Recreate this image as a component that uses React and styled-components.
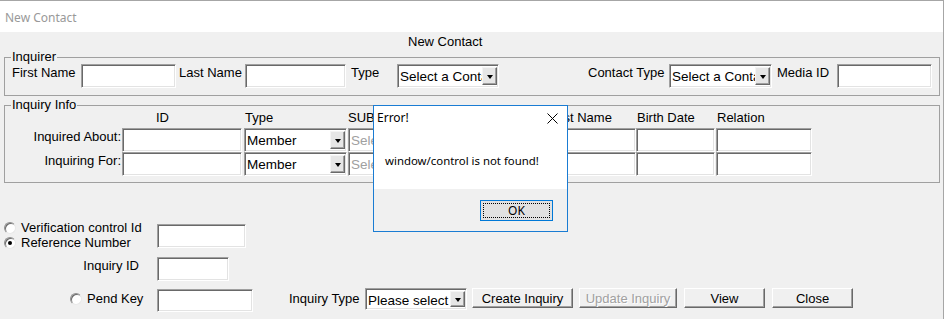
import React from "react";
import styled, { createGlobalStyle } from "styled-components";

const GlobalStyle = createGlobalStyle`
  html, body {
    margin: 0;
    padding: 0;
    background: #fff;
  }
  body {
    font-family: "Liberation Sans", Arial, sans-serif;
    font-size: 13px;
    color: #000;
  }
  * {
    box-sizing: border-box;
  }
`;

const Window = styled.div`
  position: relative;
  width: 944px;
  height: 319px;
  border-top: 1px solid #a6a6a6;
  border-right: 1px solid #a6a6a6;
  background: #f0f0f0;
  overflow: hidden;
`;

const TitleBar = styled.div`
  height: 31px;
  background: #fff;
  padding: 1px 0 0 5px;
  display: flex;
  align-items: center;
  font-family: "Noto Sans", sans-serif;
  font-size: 12px;
  color: #999;
`;

const Heading = styled.div`
  padding: 2px 0 0 408px;
  line-height: 16px;
  height: 18px;
`;

const GroupBox = styled.fieldset`
  margin: ${(p) => p.$mt || 0}px 0 0 4px;
  width: 936px;
  min-width: 0;
  padding: 0 0 ${(p) => p.$pb || 6}px 7px;
  border: 1px solid #a0a0a0;
`;

const Legend = styled.legend`
  margin-left: -1px;
  padding: 0 1px;
  line-height: 14px;
`;

const Row = styled.div`
  display: flex;
  align-items: flex-start;
  height: ${(p) => (p.$h ? `${p.$h}px` : "auto")};
`;

const Label = styled.span`
  flex: none;
  width: ${(p) => p.$w}px;
  margin-left: ${(p) => p.$ml || 0}px;
  margin-top: ${(p) => p.$mt || 0}px;
  padding-top: 1px;
  padding-right: ${(p) => p.$pr || 0}px;
  line-height: 16px;
  white-space: nowrap;
  text-align: ${(p) => (p.$right ? "right" : "left")};
`;

const sunken = `
  border: 1px solid;
  border-color: #a0a0a0 #fff #fff #a0a0a0;
  box-shadow: inset 1px 1px 0 #696969, inset -1px -1px 0 #e3e3e3;
  background: #fff;
`;

const TextBox = styled.div`
  ${sunken}
  flex: none;
  width: ${(p) => p.$w}px;
  height: ${(p) => p.$h || 24}px;
  margin-left: ${(p) => p.$ml || 0}px;
  margin-top: ${(p) => p.$mt || 0}px;
`;

const ComboBox = styled.div`
  ${sunken}
  flex: none;
  display: flex;
  width: ${(p) => p.$w}px;
  height: ${(p) => p.$h || 24}px;
  margin-left: ${(p) => p.$ml || 0}px;
  padding: 2px 1px 2px 0;
`;

const ComboText = styled.span`
  flex: 1;
  overflow: hidden;
  white-space: nowrap;
  padding-left: 2px;
  font-size: 13.5px;
  line-height: 19px;
  color: ${(p) => (p.$disabled ? "#a0a0a0" : "#000")};
`;

const DropButton = styled.span`
  flex: none;
  width: 15px;
  display: flex;
  align-items: center;
  justify-content: center;
  background: #e6e6e6;
  border: 1px solid;
  border-color: #f4f4f4 #696969 #696969 #f4f4f4;
  box-shadow: inset -1px -1px 0 #a0a0a0;
`;

const Arrow = styled.span`
  width: 0;
  height: 0;
  border-left: 3.5px solid transparent;
  border-right: 3.5px solid transparent;
  border-top: 4px solid #000;
  margin-top: 1px;
`;

const Combo = ({ w, h, ml, text, disabled }) => (
  <ComboBox $w={w} $h={h} $ml={ml}>
    <ComboText $disabled={disabled}>{text}</ComboText>
    <DropButton>
      <Arrow />
    </DropButton>
  </ComboBox>
);

const Grid = styled.div`
  display: grid;
  grid-template-columns: 110px 122px 104px 103px 98px 87px 80px 96px;
  grid-template-rows: 16px 24px 24px;
`;

const HeaderCell = styled.span`
  line-height: 12px;
  padding-left: ${(p) => p.$pl || 0}px;
  white-space: nowrap;
  overflow: hidden;
`;

const RowLabel = styled.span`
  padding: 1px 1px 0 0;
  line-height: 16px;
  text-align: right;
  white-space: nowrap;
`;

const Cell = styled.div`
  display: flex;
  padding-right: ${(p) => p.$pr || 0}px;
  & > * {
    flex: 1;
    width: auto;
  }
`;

const BottomArea = styled.div`
  margin-top: 37px;
  padding-left: 4px;
`;

const RadioStack = styled.div`
  flex: none;
  width: ${(p) => p.$w}px;
  padding-left: ${(p) => p.$pl || 0}px;
  margin-top: ${(p) => p.$mt || 0}px;
`;

const RadioLine = styled.div`
  display: flex;
  align-items: center;
  gap: 5px;
  height: 15px;
  line-height: 15px;
  white-space: nowrap;
`;

const RadioDot = styled.span`
  flex: none;
  position: relative;
  width: 12px;
  height: 12px;
  border-radius: 50%;
  border: 1px solid;
  border-color: #8f8f8f #e8e8e8 #e8e8e8 #8f8f8f;
  box-shadow: inset 1px 1px 0 #6a6a6a;
  background: #fff;
  &::after {
    content: "";
    display: ${(p) => (p.$checked ? "block" : "none")};
    position: absolute;
    left: 3px;
    top: 3px;
    width: 4px;
    height: 4px;
    border-radius: 50%;
    background: #000;
  }
`;

const Button = styled.button`
  flex: none;
  width: ${(p) => p.$w}px;
  height: 20px;
  margin-left: ${(p) => p.$ml || 0}px;
  padding: 0;
  font-family: "Liberation Sans", Arial, sans-serif;
  font-size: 13px;
  background: #f0f0f0;
  border: 1px solid;
  border-color: #fff #696969 #696969 #fff;
  box-shadow: inset -1px -1px 0 #a0a0a0;
  color: ${(p) => (p.disabled ? "#a0a0a0" : "#000")};
  text-shadow: ${(p) => (p.disabled ? "1px 1px 0 #fff" : "none")};
`;

const Dialog = styled.div`
  position: absolute;
  left: 373px;
  top: 104px;
  width: 195px;
  height: 127px;
  border: 1px solid #1a7cd3;
  background: #fff;
  display: flex;
  flex-direction: column;
  font-family: "Noto Sans", sans-serif;
  font-size: 12px;
`;

const DialogTitle = styled.div`
  height: 30px;
  display: flex;
  align-items: flex-start;
  justify-content: space-between;
  padding: 4px 9px 0 3px;
  line-height: 16px;
`;

const CloseIcon = styled.svg`
  margin-top: 3px;
`;

const DialogBody = styled.div`
  height: 53px;
  padding: 17px 0 0 11px;
  font-size: 11.4px;
  line-height: 16px;
`;

const DialogFooter = styled.div`
  flex: 1;
  background: #f0f0f0;
  display: flex;
  justify-content: flex-end;
  align-items: flex-start;
  padding: 11px 14px 0 0;
`;

const OkButton = styled.button`
  width: 73px;
  height: 21px;
  padding: 0;
  font-family: "Noto Sans", sans-serif;
  font-size: 12px;
  background: #e1e1e1;
  border: 1px solid #0078d7;
  outline: 1px dotted #000;
  outline-offset: -4px;
  color: #000;
`;

const App = () => {
  return (
    <>
      <GlobalStyle />
      <Window>
        <TitleBar>New Contact</TitleBar>
        <Heading>New Contact</Heading>

        <GroupBox $pb={7}>
          <Legend>Inquirer</Legend>
          <Row>
            <Label $w={69}>First Name</Label>
            <TextBox $w={95} />
            <Label $w={66} $ml={3}>Last Name</Label>
            <TextBox $w={101} />
            <Label $w={46} $ml={5}>Type</Label>
            <Combo w={102} text="Select a Contact Type" />
            <Label $w={81} $ml={89}>Contact Type</Label>
            <Combo w={103} text="Select a Contact Type" />
            <Label $w={60} $ml={5}>Media ID</Label>
            <TextBox $w={95} />
          </Row>
        </GroupBox>

        <GroupBox $mt={2} $pb={6}>
          <Legend>Inquiry Info</Legend>
          <Grid>
            <HeaderCell />
            <HeaderCell $pl={34}>ID</HeaderCell>
            <HeaderCell $pl={1}>Type</HeaderCell>
            <HeaderCell>SUB ID</HeaderCell>
            <HeaderCell>First Name</HeaderCell>
            <HeaderCell>Last Name</HeaderCell>
            <HeaderCell $pl={1}>Birth Date</HeaderCell>
            <HeaderCell $pl={1}>Relation</HeaderCell>

            {["Inquired About:", "Inquiring For:"].map((label) => (
              <React.Fragment key={label}>
                <RowLabel>{label}</RowLabel>
                <Cell $pr={2}>
                  <TextBox />
                </Cell>
                <Cell $pr={1}>
                  <Combo text="Member" />
                </Cell>
                <Cell $pr={1}>
                  <Combo text="Select..." disabled />
                </Cell>
                <Cell>
                  <TextBox />
                </Cell>
                <Cell>
                  <TextBox />
                </Cell>
                <Cell $pr={1}>
                  <TextBox />
                </Cell>
                <Cell>
                  <TextBox />
                </Cell>
              </React.Fragment>
            ))}
          </Grid>
        </GroupBox>

        <BottomArea>
          <Row $h={37}>
            <RadioStack $w={153}>
              <RadioLine>
                <RadioDot />
                Verification control Id
              </RadioLine>
              <RadioLine>
                <RadioDot $checked />
                Reference Number
              </RadioLine>
            </RadioStack>
            <TextBox $w={89} $mt={4} />
          </Row>
          <Row $h={31}>
            <Label $w={153} $pr={18} $right>
              Inquiry ID
            </Label>
            <TextBox $w={72} />
          </Row>
          <Row>
            <RadioStack $w={153} $pl={66} $mt={3}>
              <RadioLine>
                <RadioDot />
                Pend Key
              </RadioLine>
            </RadioStack>
            <TextBox $w={96} $h={23} $mt={1} />
            <Label $w={76} $ml={36} $mt={2}>Inquiry Type</Label>
            <Combo w={102} h={22} text="Please select one" />
            <Button $w={101} $ml={5}>Create Inquiry</Button>
            <Button $w={98} $ml={6} disabled>Update Inquiry</Button>
            <Button $w={81} $ml={7}>View</Button>
            <Button $w={81} $ml={7}>Close</Button>
          </Row>
        </BottomArea>

        <Dialog>
          <DialogTitle>
            <span>Error!</span>
            <CloseIcon width="11" height="11" viewBox="0 0 11 11">
              <path d="M0.5 0.5 L10.5 10.5 M10.5 0.5 L0.5 10.5" stroke="#000" strokeWidth="1" />
            </CloseIcon>
          </DialogTitle>
          <DialogBody>window/control is not found!</DialogBody>
          <DialogFooter>
            <OkButton>OK</OkButton>
          </DialogFooter>
        </Dialog>
      </Window>
    </>
  );
};

export default App;
